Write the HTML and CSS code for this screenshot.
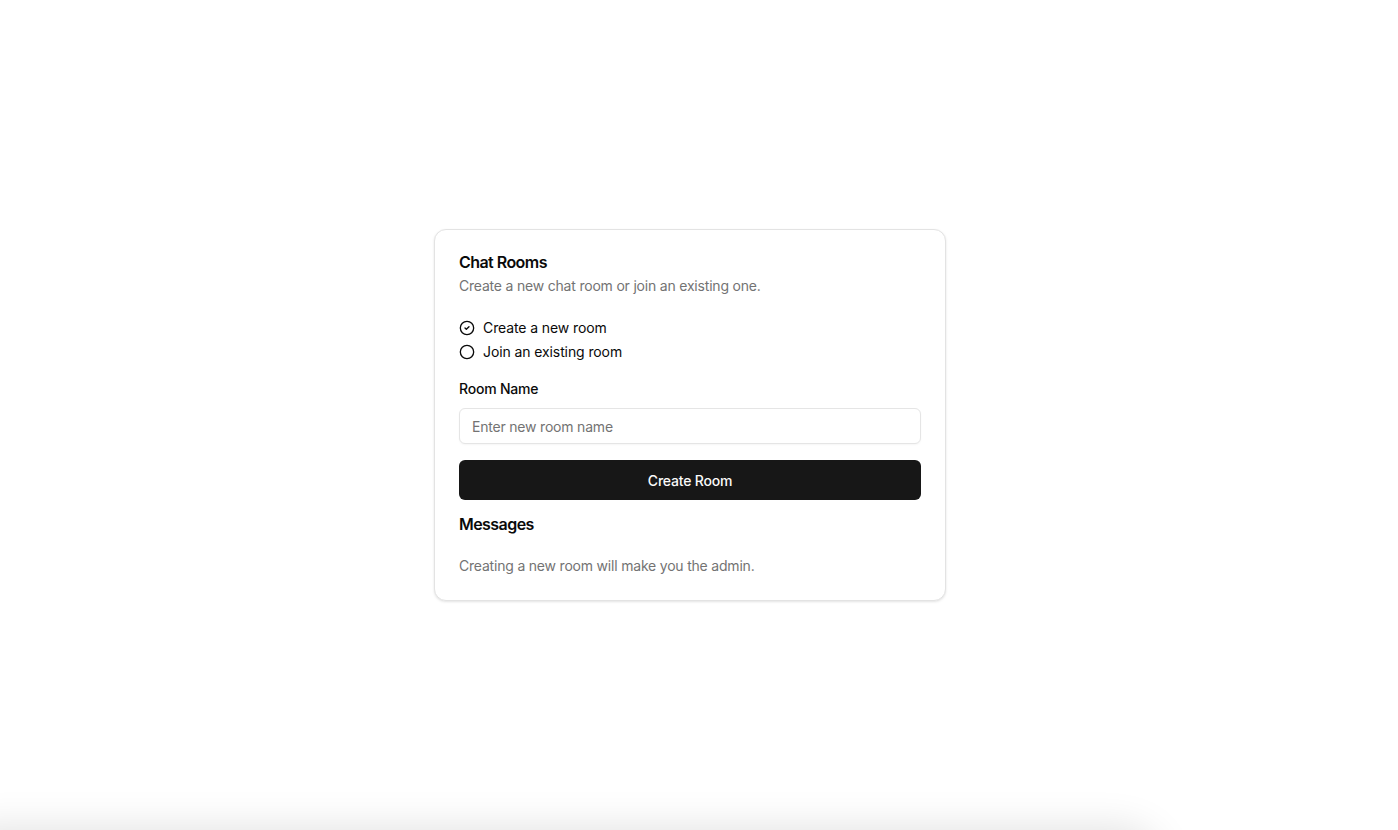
FILE: index.html
```html
<!DOCTYPE html>
<html lang="en">
<head>
<meta charset="utf-8">
<title>Chat Rooms</title>
<link rel="stylesheet" href="styles.css">
</head>
<body>
<main class="page">
  <section class="card">
    <header class="card-header">
      <h1 class="card-title">Chat Rooms</h1>
      <p class="card-desc">Create a new chat room or join an existing one.</p>
    </header>
    <div class="radio-group">
      <label class="radio-item">
        <svg class="radio-icon" viewBox="0 0 24 24" width="16" height="16" fill="none" stroke="currentColor" stroke-width="2" stroke-linecap="round" stroke-linejoin="round"><circle cx="12" cy="12" r="10"/><path d="m9 12 2 2 4-4"/></svg>
        <span>Create a new room</span>
      </label>
      <label class="radio-item">
        <svg class="radio-icon" viewBox="0 0 24 24" width="16" height="16" fill="none" stroke="currentColor" stroke-width="2" stroke-linecap="round" stroke-linejoin="round"><circle cx="12" cy="12" r="10"/></svg>
        <span>Join an existing room</span>
      </label>
    </div>
    <label class="field-label" for="room">Room Name</label>
    <input class="input" id="room" type="text" placeholder="Enter new room name">
    <button class="btn" type="button">Create Room</button>
    <h2 class="section-title">Messages</h2>
    <p class="note">Creating a new room will make you the admin.</p>
  </section>
</main>
<div class="bottom-shade"></div>
</body>
</html>
```
FILE: styles.css
```css
* { box-sizing: border-box; }
html, body {
  margin: 0;
  padding: 0;
  background: #ffffff;
  font-family: Inter, "Noto Sans", "Liberation Sans", sans-serif;
  color: #0a0a0a;
  overflow: hidden;
}
.page {
  min-height: 100vh;
  display: flex;
  align-items: center;
  justify-content: center;
  padding-right: 18px;
}
.card {
  width: 512px;
  border: 1px solid #e3e3e3;
  border-radius: 12px;
  background: #fff;
  box-shadow: 0 1px 3px rgba(0,0,0,0.08), 0 1px 2px rgba(0,0,0,0.04);
  padding: 24px;
  display: flex;
  flex-direction: column;
}
.card-header {
  display: flex;
  flex-direction: column;
  gap: 6px;
}
.card-title {
  margin: 0;
  font-size: 16px;
  line-height: 16px;
  font-weight: 600;
  letter-spacing: -0.55px;
}
.card-desc {
  margin: 0;
  font-size: 14px;
  line-height: 20px;
  color: #737373;
  letter-spacing: -0.2px;
}
.radio-group {
  margin-top: 22px;
  display: flex;
  flex-direction: column;
  gap: 4px;
}
.radio-item {
  display: flex;
  align-items: center;
  gap: 8px;
  font-size: 14px;
  line-height: 20px;
  font-weight: 400;
  color: #0a0a0a;
  letter-spacing: -0.1px;
}
.radio-icon {
  display: block;
  flex: none;
  color: #0a0a0a;
}
.field-label {
  margin-top: 17px;
  font-size: 14px;
  line-height: 20px;
  font-weight: 500;
  letter-spacing: -0.2px;
}
.input {
  margin-top: 9px;
  height: 36px;
  width: 100%;
  border: 1px solid #e5e5e5;
  border-radius: 6px;
  padding: 0 12px;
  font-family: inherit;
  font-size: 14px;
  color: #0a0a0a;
  background: #fff;
  box-shadow: 0 1px 2px rgba(0,0,0,0.04);
  outline: none;
  letter-spacing: -0.2px;
}
.input::placeholder { color: #737373; }
.btn {
  margin-top: 16px;
  height: 40px;
  width: 100%;
  border: none;
  border-radius: 6px;
  background: #171717;
  color: #fafafa;
  font-family: inherit;
  font-size: 14px;
  font-weight: 500;
  letter-spacing: -0.2px;
}
.section-title {
  margin: 12px 0 0;
  font-size: 16px;
  line-height: 24px;
  font-weight: 600;
  letter-spacing: -0.55px;
}
.note {
  margin: 20px 0 0;
  font-size: 14px;
  line-height: 20px;
  color: #737373;
  letter-spacing: -0.2px;
}
.bottom-shade {
  position: fixed;
  left: -40px;
  top: 838px;
  width: 1190px;
  height: 60px;
  border-radius: 30px;
  box-shadow: 0 0 40px 10px rgba(0,0,0,0.12);
}
```
